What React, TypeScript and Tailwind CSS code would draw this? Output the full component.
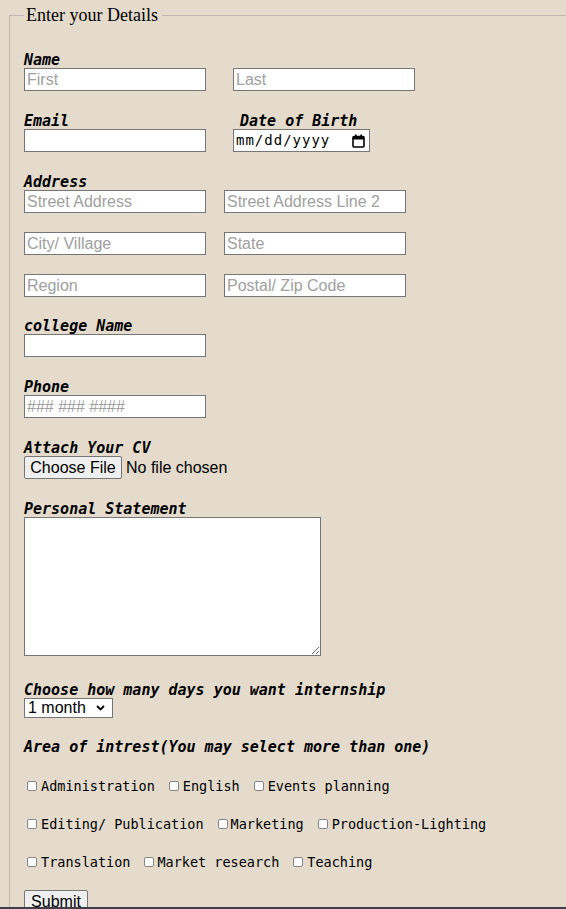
import React from "react";

const mono = "font-['DejaVu_Sans_Mono',monospace]";
const sans = "font-['Liberation_Sans',Arial,sans-serif]";

function Label({ children, className = "" }: { children: React.ReactNode; className?: string }) {
  return (
    <div className={`h-[17px] leading-[19px] text-[15px] font-bold italic text-black whitespace-pre ${mono} ${className}`}>
      {children}
    </div>
  );
}

function TextBox({ ph = "", className = "" }: { ph?: string; className?: string }) {
  return (
    <input
      type="text"
      placeholder={ph}
      className={`block h-[23px] w-[182px] border border-[#767676] bg-white px-[2px] text-[16px] text-black outline-none placeholder:text-[#a0a0a0] ${sans} ${className}`}
    />
  );
}

function Check({ label, tight = false }: { label: string; tight?: boolean }) {
  return (
    <div className="flex items-center">
      <span className="ml-[3px] block h-[10px] w-[10px] rounded-[2px] border border-[#858585] bg-white" />
      <span className={`${tight ? "ml-[3px]" : "ml-[4px]"} text-[13.5px] leading-[20px] text-black whitespace-pre ${mono}`}>{label}</span>
    </div>
  );
}

export default function App() {
  return (
    <div className="flex h-[909px] w-[566px] flex-col overflow-hidden bg-[#e4dbcd]">
      <div className="h-[907px] overflow-hidden">
        <fieldset className="ml-[9px] mt-[4px] min-h-[1000px] w-[700px] shrink-0 border border-[#bdb8b0] pl-[14px]">
          <legend className={`pl-[2px] pr-[4px] text-[18px] leading-[22px] text-black font-['Liberation_Serif','Times_New_Roman',serif]`}>
            Enter your Details
          </legend>
          <div className="flex flex-col pt-[25px]">
            <Label>Name</Label>
            <div className="flex gap-[27px]">
              <TextBox ph="First" />
              <TextBox ph="Last" />
            </div>

            <div className="mt-[21px] flex gap-[27px]">
              <div>
                <Label>Email</Label>
                <TextBox />
              </div>
              <div>
                <Label className="pl-[7px]">Date of Birth</Label>
                <div className="flex h-[23px] w-[137px] items-center justify-between border border-[#767676] bg-white pl-[2px] pr-[4px]">
                  <span className={`text-[14px] tracking-[1px] text-black ${mono}`}>mm/dd/yyyy</span>
                  <svg width="13" height="14" viewBox="0 0 13 14" fill="none">
                    <rect x="1" y="2.5" width="11" height="10.5" rx="1" stroke="#000" strokeWidth="1.6" />
                    <rect x="1" y="2.5" width="11" height="3" fill="#000" />
                    <rect x="3" y="0.5" width="1.6" height="3" fill="#000" />
                    <rect x="8.4" y="0.5" width="1.6" height="3" fill="#000" />
                  </svg>
                </div>
              </div>
            </div>

            <div className="mt-[21px]">
              <Label>Address</Label>
              <div className="flex flex-col gap-[19px]">
                <div className="flex gap-[18px]">
                  <TextBox ph="Street Address" />
                  <TextBox ph="Street Address Line 2" />
                </div>
                <div className="flex gap-[18px]">
                  <TextBox ph="City/ Village" />
                  <TextBox ph="State" />
                </div>
                <div className="flex gap-[18px]">
                  <TextBox ph="Region" />
                  <TextBox ph="Postal/ Zip Code" />
                </div>
              </div>
            </div>

            <div className="mt-[20px]">
              <Label>college Name</Label>
              <TextBox />
            </div>

            <div className="mt-[21px]">
              <Label>Phone</Label>
              <TextBox ph="### ### ####" />
            </div>

            <div className="mt-[21px]">
              <Label>Attach Your CV</Label>
              <div className="flex h-[23px] items-center">
                <div className={`flex h-[23px] w-[98px] items-center justify-center rounded-[2px] border border-[#767676] bg-[#efefef] text-[16px] leading-[20px] text-black ${sans}`}>
                  Choose File
                </div>
                <span className={`ml-[4px] text-[16px] leading-[20px] text-black ${sans}`}>No file chosen</span>
              </div>
            </div>

            <div className="mt-[21px]">
              <Label>Personal Statement</Label>
              <textarea className="block h-[139px] w-[297px] border border-[#767676] bg-white outline-none" />
            </div>

            <div className="mt-[25px]">
              <Label>Choose how many days you want internship</Label>
              <div className={`flex h-[20px] w-[89px] items-center justify-between border border-[#767676] bg-white pl-[3px] pr-[7px] text-[16px] text-black ${sans}`}>
                <span className="leading-[18px]">1 month</span>
                <svg width="9" height="6" viewBox="0 0 9 6" fill="none">
                  <path d="M1 1l3.5 3.5L8 1" stroke="#000" strokeWidth="1.8" />
                </svg>
              </div>
            </div>

            <div className="mt-[20px]">
              <Label>Area of intrest(You may select more than one)</Label>
            </div>

            <div className="mt-[21px] flex flex-col gap-[18px]">
              <div className="flex h-[20px] items-center gap-[11px]">
                <Check label="Administration" />
                <Check label="English" />
                <Check label="Events planning" />
              </div>
              <div className="flex h-[20px] items-center gap-[11px]">
                <Check label="Editing/ Publication" />
                <Check label="Marketing" tight />
                <Check label="Production-Lighting" />
              </div>
              <div className="flex h-[20px] items-center gap-[11px]">
                <Check label="Translation" />
                <Check label="Market research" tight />
                <Check label="Teaching" />
              </div>
            </div>

            <div className="mt-[18px]">
              <div className={`flex h-[24px] w-[64px] items-center justify-center rounded-[2px] border border-[#767676] bg-[#efefef] text-[16px] text-black ${sans}`}>
                Submit
              </div>
            </div>
          </div>
        </fieldset>
      </div>
      <div className="h-[2px] w-full bg-[#3f3f4c]" />
    </div>
  );
}
